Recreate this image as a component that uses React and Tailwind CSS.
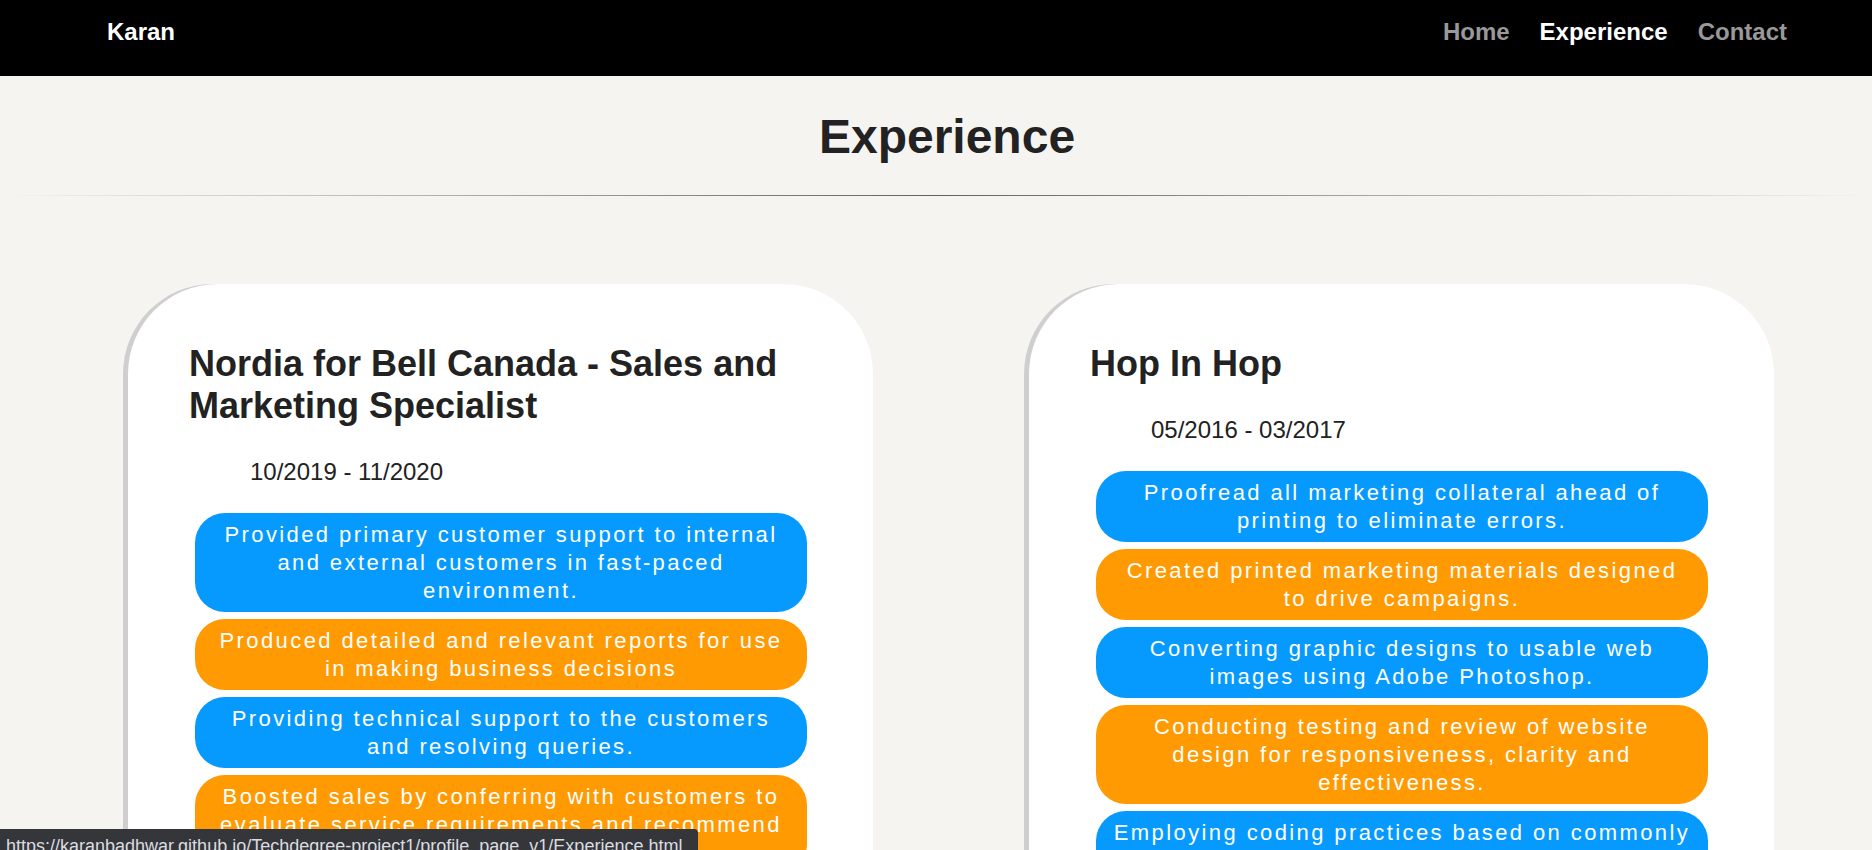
const jobs = [
  {
    title: "Nordia for Bell Canada - Sales and Marketing Specialist",
    dates: "10/2019 - 11/2020",
    items: [
      "Provided primary customer support to internal and external customers in fast-paced environment.",
      "Produced detailed and relevant reports for use in making business decisions",
      "Providing technical support to the customers and resolving queries.",
      "Boosted sales by conferring with customers to evaluate service requirements and recommend suitable products and services.",
    ],
  },
  {
    title: "Hop In Hop",
    dates: "05/2016 - 03/2017",
    items: [
      "Proofread all marketing collateral ahead of printing to eliminate errors.",
      "Created printed marketing materials designed to drive campaigns.",
      "Converting graphic designs to usable web images using Adobe Photoshop.",
      "Conducting testing and review of website design for responsiveness, clarity and effectiveness.",
      "Employing coding practices based on commonly accepted standards to establish site layout and user interface.",
    ],
  },
];

function Card({ job }) {
  return (
    <div className="w-[745px] shrink-0 bg-white rounded-t-[90px] shadow-[-5px_0_0_#cfcfcf] pt-[59px] px-[61px] pb-10">
      <h2 className="text-[36px] font-bold leading-[42px] text-[#222]">{job.title}</h2>
      <p className="mt-[31px] pl-[61px] text-[24px] leading-[28px] text-[#222]">{job.dates}</p>
      <ul className="mt-[27px] flex flex-col gap-[7px]">
        {job.items.map((item, i) => (
          <li
            key={i}
            className={
              "w-[612px] ml-[6px] rounded-[30px] py-[7.5px] px-[16.5px] text-center text-white text-[22px] leading-[28px] tracking-[2.4px] " +
              (i % 2 === 0 ? "bg-[#069aff]" : "bg-[#ff9a03]")
            }
          >
            {item}
          </li>
        ))}
      </ul>
    </div>
  );
}

export default function App() {
  return (
    <div className="relative h-[850px] overflow-hidden bg-[#f5f4f0] font-['Liberation_Sans',Arial,sans-serif]">
      <nav className="h-[76px] bg-black flex items-center justify-between pl-[107px] pr-[85px] pb-[12px]">
        <span className="text-white text-[24px] font-bold">Karan</span>
        <div className="flex gap-[30px] text-[24px] font-bold">
          <a className="text-[#999]">Home</a>
          <a className="text-white">Experience</a>
          <a className="text-[#999]">Contact</a>
        </div>
      </nav>

      <h1 className="mt-[25px] pl-[22px] text-center text-[48px] font-bold text-[#222]">Experience</h1>
      <div className="mt-[22px] h-px bg-gradient-to-r from-transparent via-[rgba(0,0,0,0.6)] to-transparent" />

      <div className="mt-[88px] flex gap-[156px] pl-[128px]">
        {jobs.map((job) => (
          <Card key={job.title} job={job} />
        ))}
      </div>

      <div className="absolute left-0 top-[829px] w-[698px] h-[30px] bg-[#35363a] rounded-tr-[4px] pl-[6px] pt-[6px] text-[18px] leading-[22px] text-[#dadce0] whitespace-nowrap overflow-hidden">
        https://karanbadhwar.github.io/Techdegree-project1/profile_page_v1/Experience.html
      </div>
    </div>
  );
}
